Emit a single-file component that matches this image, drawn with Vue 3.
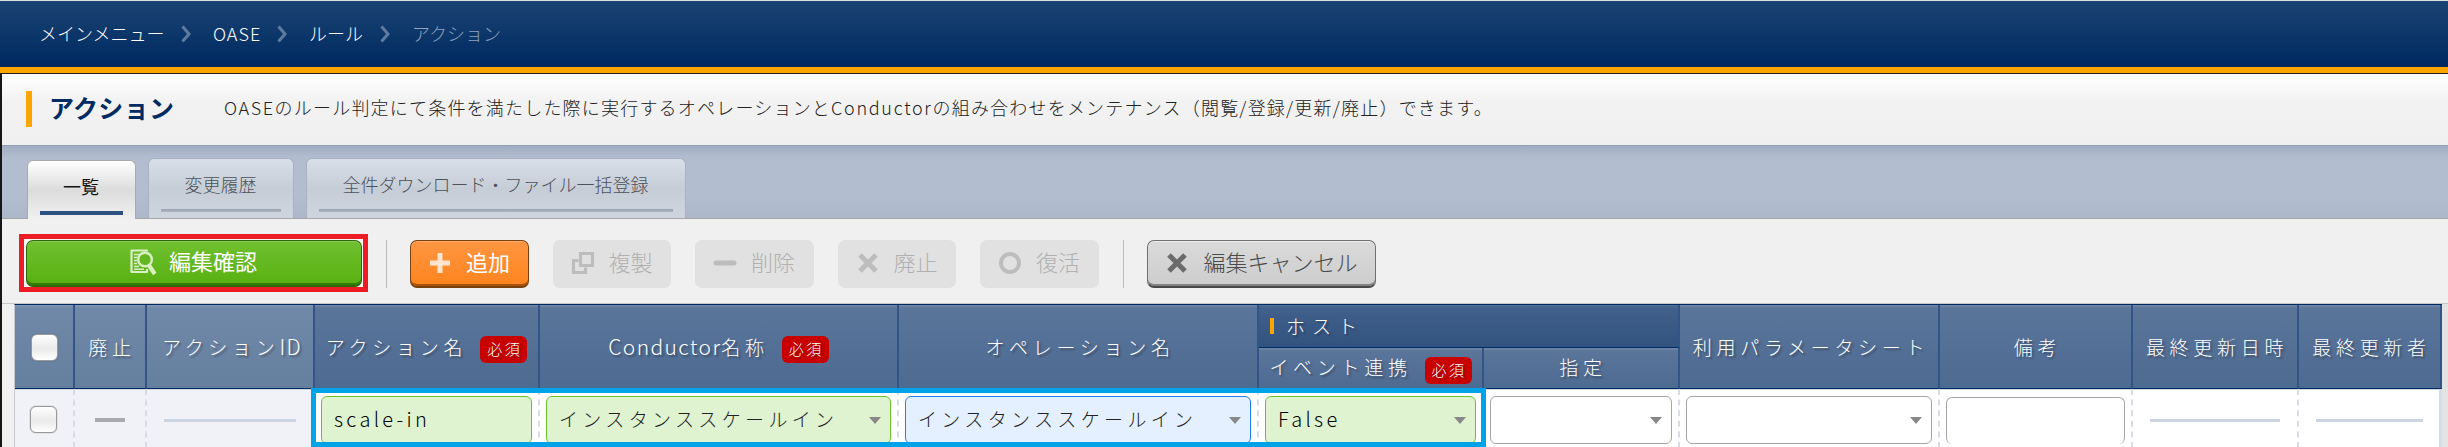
<script setup>
const crumbs = [
  { t: 'メインメニュー', w: 174 },
  { t: 'OASE', w: 96 },
  { t: 'ルール', w: 103 },
]
const tools = [
  { icon: 'plus', t: '追加', on: true },
  { icon: 'copy', t: '複製' },
  { icon: 'minus', t: '削除' },
  { icon: 'cross', t: '廃止' },
  { icon: 'ring', t: '復活' },
]
</script>

<template>
  <div class="page">
    <header class="top">
      <nav class="crumbs">
        <div v-for="c in crumbs" :key="c.t" class="crumb" :style="{ width: c.w + 'px' }">
          <span :class="{ latin: c.t === 'OASE' }">{{ c.t }}</span>
          <svg width="12" height="18" viewBox="0 0 12 18"><path d="M2.500 1.500 9 9l-6.500 7.500" fill="none" stroke="#5f7ba1" stroke-width="3" /></svg>
        </div>
        <span class="here">アクション</span>
      </nav>
    </header>
    <main class="content">
      <section class="title">
        <i class="mark"></i>
        <h1>アクション</h1>
        <p><span class="d1">OASE</span>のルール判定にて条件を満たした際に実行するオペレーションと<span class="d2">Conductor</span>の組み合わせをメンテナンス（閲覧/登録/更新/廃止）できます。</p>
      </section>
      <section class="tabs">
        <div class="tab active"><span>一覧</span></div>
        <div class="tab t2"><span>変更履歴</span></div>
        <div class="tab t3"><span>全件ダウンロード・ファイル一括登録</span></div>
      </section>
      <section class="tools">
        <div class="redbox">
          <div class="btn green">
            <svg class="doc" width="28" height="28" viewBox="0 0 28 28" fill="none" stroke="#d9f0c5">
              <path d="M18 3.500V2.500H2.500V24H18v-3" stroke-width="2.200" stroke-linejoin="round" />
              <path d="M5 6.500h5M5 9.500h3M5 12.500h3M5 15.500h3M5 18.500h5M5 21.200h10" stroke-width="1.500" />
              <circle cx="16" cy="11.500" r="6.800" stroke-width="2.400" fill="#63b822" />
              <path d="m20 17.500 5.800 8.500" stroke-width="4.200" />
            </svg>
            <span>編集確認</span>
          </div>
        </div>
        <i class="sep"></i>
        <div v-for="b in tools" :key="b.t" class="btn" :class="b.on ? 'orange' : 'off'">
          <svg width="24" height="24" viewBox="0 0 24 24" fill="none" stroke="currentColor">
            <path v-if="b.icon === 'plus'" d="M12 2v20M2 12h20" stroke-width="5" />
            <g v-if="b.icon === 'copy'" stroke-width="3.200"><path d="M9.500 2.500h12v12h-12z" /><path d="M7.500 9.500h-5v12h12v-5" /></g>
            <path v-if="b.icon === 'minus'" d="M3 12h18" stroke-width="5" stroke-linecap="round" />
            <path v-if="b.icon === 'cross'" d="m4 4 16 16M20 4 4 20" stroke-width="5" />
            <circle v-if="b.icon === 'ring'" cx="12" cy="12" r="9" stroke-width="4" />
          </svg>
          <span>{{ b.t }}</span>
        </div>
        <i class="sep s2"></i>
        <div class="btn cancel">
          <svg width="24" height="24" viewBox="0 0 24 24"><path d="m4 4 16 16M20 4 4 20" stroke="#6b6b6b" stroke-width="5" /></svg>
          <span>編集キャンセル</span>
        </div>
      </section>
      <div class="tablewrap">
        <div class="grid">
          <div class="h light tall"><i class="check"></i></div>
          <div class="h light tall"><span>廃止</span></div>
          <div class="h light tall"><span>アクション<b class="m">ID</b></span></div>
          <div class="h tall"><span>アクション名</span><em>必須</em></div>
          <div class="h tall"><span><b class="m">Conductor</b>名称</span><em>必須</em></div>
          <div class="h tall"><span>オペレーション名</span></div>
          <div class="h group"><i></i><span>ホスト</span></div>
          <div class="h tall k9"><span>利用パラメータシート</span></div>
          <div class="h tall k10"><span>備考</span></div>
          <div class="h tall k11"><span>最終更新日時</span></div>
          <div class="h tall k12"><span>最終更新者</span></div>
          <div class="h sub k7"><span>イベント連携</span><em>必須</em></div>
          <div class="h sub k8"><span>指定</span></div>

          <div class="c soft"><i class="check"></i></div>
          <div class="c soft"><i class="dash grey"></i></div>
          <div class="c soft"><i class="dash id"></i></div>
          <div class="c"><div class="field ok"><span class="m wide">scale-in</span></div></div>
          <div class="c"><div class="field ok sel"><span class="jp">インスタンススケールイン</span><i class="arr"></i></div></div>
          <div class="c"><div class="field blue sel"><span class="jp">インスタンススケールイン</span><i class="arr"></i></div></div>
          <div class="c"><div class="field ok sel"><span class="m wide">False</span><i class="arr"></i></div></div>
          <div class="c"><div class="field sel"><i class="arr"></i></div></div>
          <div class="c"><div class="field sel"><i class="arr"></i></div></div>
          <div class="c"><div class="field area"></div></div>
          <div class="c"><i class="dash date"></i></div>
          <div class="c last"><i class="dash user"></i></div>
        </div>
        <div class="bluebox"></div>
      </div>
    </main>
  </div>
</template>

<style>
body { margin: 0; overflow: hidden; }
</style>

<style scoped>
* { box-sizing: border-box; }
i, em { font-style: normal; }
.page { width: 2448px; height: 447px; overflow: hidden; background: #f0f0f0; font-family: "Noto Sans CJK JP", sans-serif; font-size: 18px; line-height: 26px; font-weight: 300; display: flex; flex-direction: column; }
span, p, h1 { white-space: nowrap; }
.top { height: 74px; flex: none; border-top: 1px solid #dce3e5; border-bottom: 1px solid #222; background: linear-gradient(#1b4473, #002b62 62px, #00265a 66px, #ffa500 66px); }
.crumbs { height: 66px; padding: 0 0 3px 39px; display: flex; align-items: center; color: #fff; }
.crumb { display: flex; align-items: center; justify-content: space-between; padding-right: 21px; }
.crumb svg { margin-top: 2px; }
.latin { letter-spacing: 1px; }
.here { color: #8fa2bc; }
.content { flex: 1; border-left: 2px solid #161616; display: flex; flex-direction: column; }
.title { height: 72px; flex: none; display: flex; align-items: center; padding-left: 24px; padding-bottom: 2px; border-bottom: 1px solid #929fb5; background: linear-gradient(#fff, #f2f2f2 28px, #f0f0f0); }
.mark { width: 6px; height: 36px; background: #ffa500; }
h1 { margin: 0 0 4px; padding-left: 17px; width: 192px; font-size: 25px; letter-spacing: .3px; font-weight: 700; color: #002b62; line-height: 36px; }
p { margin: 0 0 3px; font-size: 18px; letter-spacing: 1.2px; color: #222; }
.d1 { letter-spacing: 1.6px; }
.d2 { letter-spacing: 1.7px; }
.tabs { height: 73px; flex: none; display: flex; align-items: flex-end; padding-left: 24.500px; border-bottom: 1px solid #a5a5a5; background: linear-gradient(#a1adc0, #b2bdd0 12px, #b2bdd0 50px, #acb8ca); }
.tab { height: 60px; border: 1px solid #a8b1bd; border-bottom: 0; border-radius: 6px 6px 0 0; color: #4c525b; background: linear-gradient(#d8dfe8, #c6cdd6 50%, #ced5df); display: flex; flex-direction: column; align-items: center; padding-top: 12px; }
.tab::after { content: ""; height: 3px; width: calc(100% - 24px); margin-top: 12px; background: linear-gradient(#98a2b1, #aeb6c2); flex: none; }
.tab.active { width: 109px; height: 59px; margin-bottom: -1px; border-color: #aaa; color: #111; font-weight: 400; background: linear-gradient(#fff, #dcdcdc 50%, #f0f0f0); }
.tab.active::after { height: 4px; background: #2c5080; margin-top: 12px; }
.t2 { width: 146px; margin-left: 12px; }
.t3 { width: 380px; margin-left: 12px; }
.tools { height: 84px; flex: none; display: flex; align-items: flex-start; padding: 15px 0 0 17px; }
.redbox { width: 349px; height: 58px; border: 5px solid #ed1c24; background: #f8f8f8; padding: 1px 1px 0 2px; }
.btn { height: 48px; border-radius: 7px; font-size: 22px; display: flex; align-items: center; padding-bottom: 2px; flex: none; }
.btn span { margin-bottom: 4px; }
.green { width: 336px; height: 47px; color: #fff; background: linear-gradient(#70c030, #58b010); border: 1px solid #2e680a; border-bottom-width: 2px; box-shadow: inset 0 -2px #367d06, inset 0 1px #8aca55; padding-left: 102px; }
.green span { margin-left: 12px; font-weight: 400; }
.sep { width: 1px; height: 48px; margin: 6px 23px 0 18px; background: #bbb; flex: none; }
.s2 { margin-left: 0; }
.orange, .off { width: 118.5px; margin: 6px 24px 0 0; padding-left: 18px; }
.orange svg, .off svg { margin-right: 14px; }
.orange { color: #ffe5cf; background: linear-gradient(#ff9642, #ff841e); border: 1px solid #78410f; border-bottom-width: 2px; box-shadow: inset 0 -2px #a85108, inset 0 1px #ffad6c; padding-left: 17px; padding-bottom: 1px; }
.orange span { color: #fff; font-weight: 400; }
.off { color: #bdbdbd; background: #e1e1e1; }
.off span { color: #b0b0b0; }
.cancel { width: 229px; margin-top: 6px; padding-left: 17px; padding-bottom: 1px; background: linear-gradient(#dadada, #cdcdcd); color: #4a4a4a; border: 1px solid #707070; border-bottom: 2px solid #484848; box-shadow: inset 0 -2px #828282, inset 0 1px #eee; }
.cancel span { margin-left: 15px; }
.tablewrap { position: relative; height: 144px; border-top: 1px solid #c8c8c8; background: #e3e3e3; padding-left: 12px; }
.tablewrap::before { content: ""; position: absolute; left: 0; top: 0; width: 12px; height: 100%; background: #f0f0f0; }
.grid { border-left: 1px solid #c4c7cc; width: 2428px; height: 143px; display: grid; grid-template-columns: 60px 72px 168px 225px 359px 360px 225px 196px 260px 193px 166px 143px; grid-template-rows: 43px 41px 59px; border-top: 1px solid #002b62; }
.h { border-right: 2px solid #325587; border-bottom: 1px solid #002b62; color: #fff; background: linear-gradient(#7288a8 0, #5b759a 3px, #4d6a91); display: flex; align-items: center; justify-content: center; text-shadow: 2px 2px 2px #0005; font-size: 19px; font-weight: 300; letter-spacing: 4.700px; }
.h span { margin-right: -4px; }
.tall { grid-row: 1 / 3; }
.light { background: linear-gradient(#8297b3 0, #7189a9 3px, #657f9f); }
.group { grid-row: 1; grid-column: 7 / 9; justify-content: flex-start; padding: 0 0 1px 11px; background: linear-gradient(#50709a 0, #41608b 3px, #32537f); letter-spacing: 7px; }
.group i { width: 4px; height: 16px; background: #ffa500; margin-right: 12px; }
.sub { grid-row: 2; }
.sub span { margin-bottom: 2px; }
.k7 { grid-column: 7; }
.k8 { grid-column: 8; }
.k9 { grid-column: 9; }
.k10 { grid-column: 10; }
.k11 { grid-column: 11; }
.k12 { grid-column: 12; }
em { width: 47px; height: 27px; margin-left: 17px; border-radius: 6px; background: #c80000; font-size: 15px; letter-spacing: 2.500px; padding-left: 7px; line-height: 26px; flex: none; }
.tall em, .sub em { margin-top: 5px; }
.m { font-weight: 300; font-size: 21px; letter-spacing: 1.400px; }
.wide { font-size: 20px; letter-spacing: 3.300px; color: #000; }
.c { grid-row: 3; background: #fff; border-top: 1px solid #cfd7e2; border-right: 2px dashed #d5dce6; padding: 6px 6px 0; }
.soft { background: #f0f2f7; }
.last { border-right-style: solid; border-right-width: 3px; }
.check { display: block; width: 27px; height: 27px; border: 1px solid #999; border-radius: 6px; background: linear-gradient(#fff, #eaeaea 55%, #fff); box-shadow: 0 0 1px #555; flex: none; }
.h .check { margin-top: 2px; }
.c .check { margin: 10px 0 0 9px; }
.dash { display: block; height: 3px; margin: 23px auto 0; background: #cbd5e2; }
.grey { width: 30px; background: #a9aaad; height: 4px; margin-top: 22px; }
.id { width: 132px; }
.date { width: 130px; }
.user { width: 107px; }
.field { height: 48px; border: 1px solid #a5a5a5; border-radius: 6px; background: #fff; display: flex; align-items: center; padding: 0 9px 0 12px; }
.field span { margin-bottom: 3px; }
.ok { background: #dff3d0; border-color: #6cc32c; }
.blue { background: #e4f0ff; border-color: #2080ee; }
.jp { font-size: 19px; font-weight: 300; letter-spacing: 4.350px; color: #222; }
.arr { margin-left: auto; border: 6px solid transparent; border-top: 7px solid #888; border-bottom: 0; }
.area { height: 47px; margin-top: 1px; border-bottom: 0; }
.bluebox { position: absolute; left: 309px; top: 84px; width: 1175px; height: 59px; border: 5px solid #00a2e8; }
</style>
